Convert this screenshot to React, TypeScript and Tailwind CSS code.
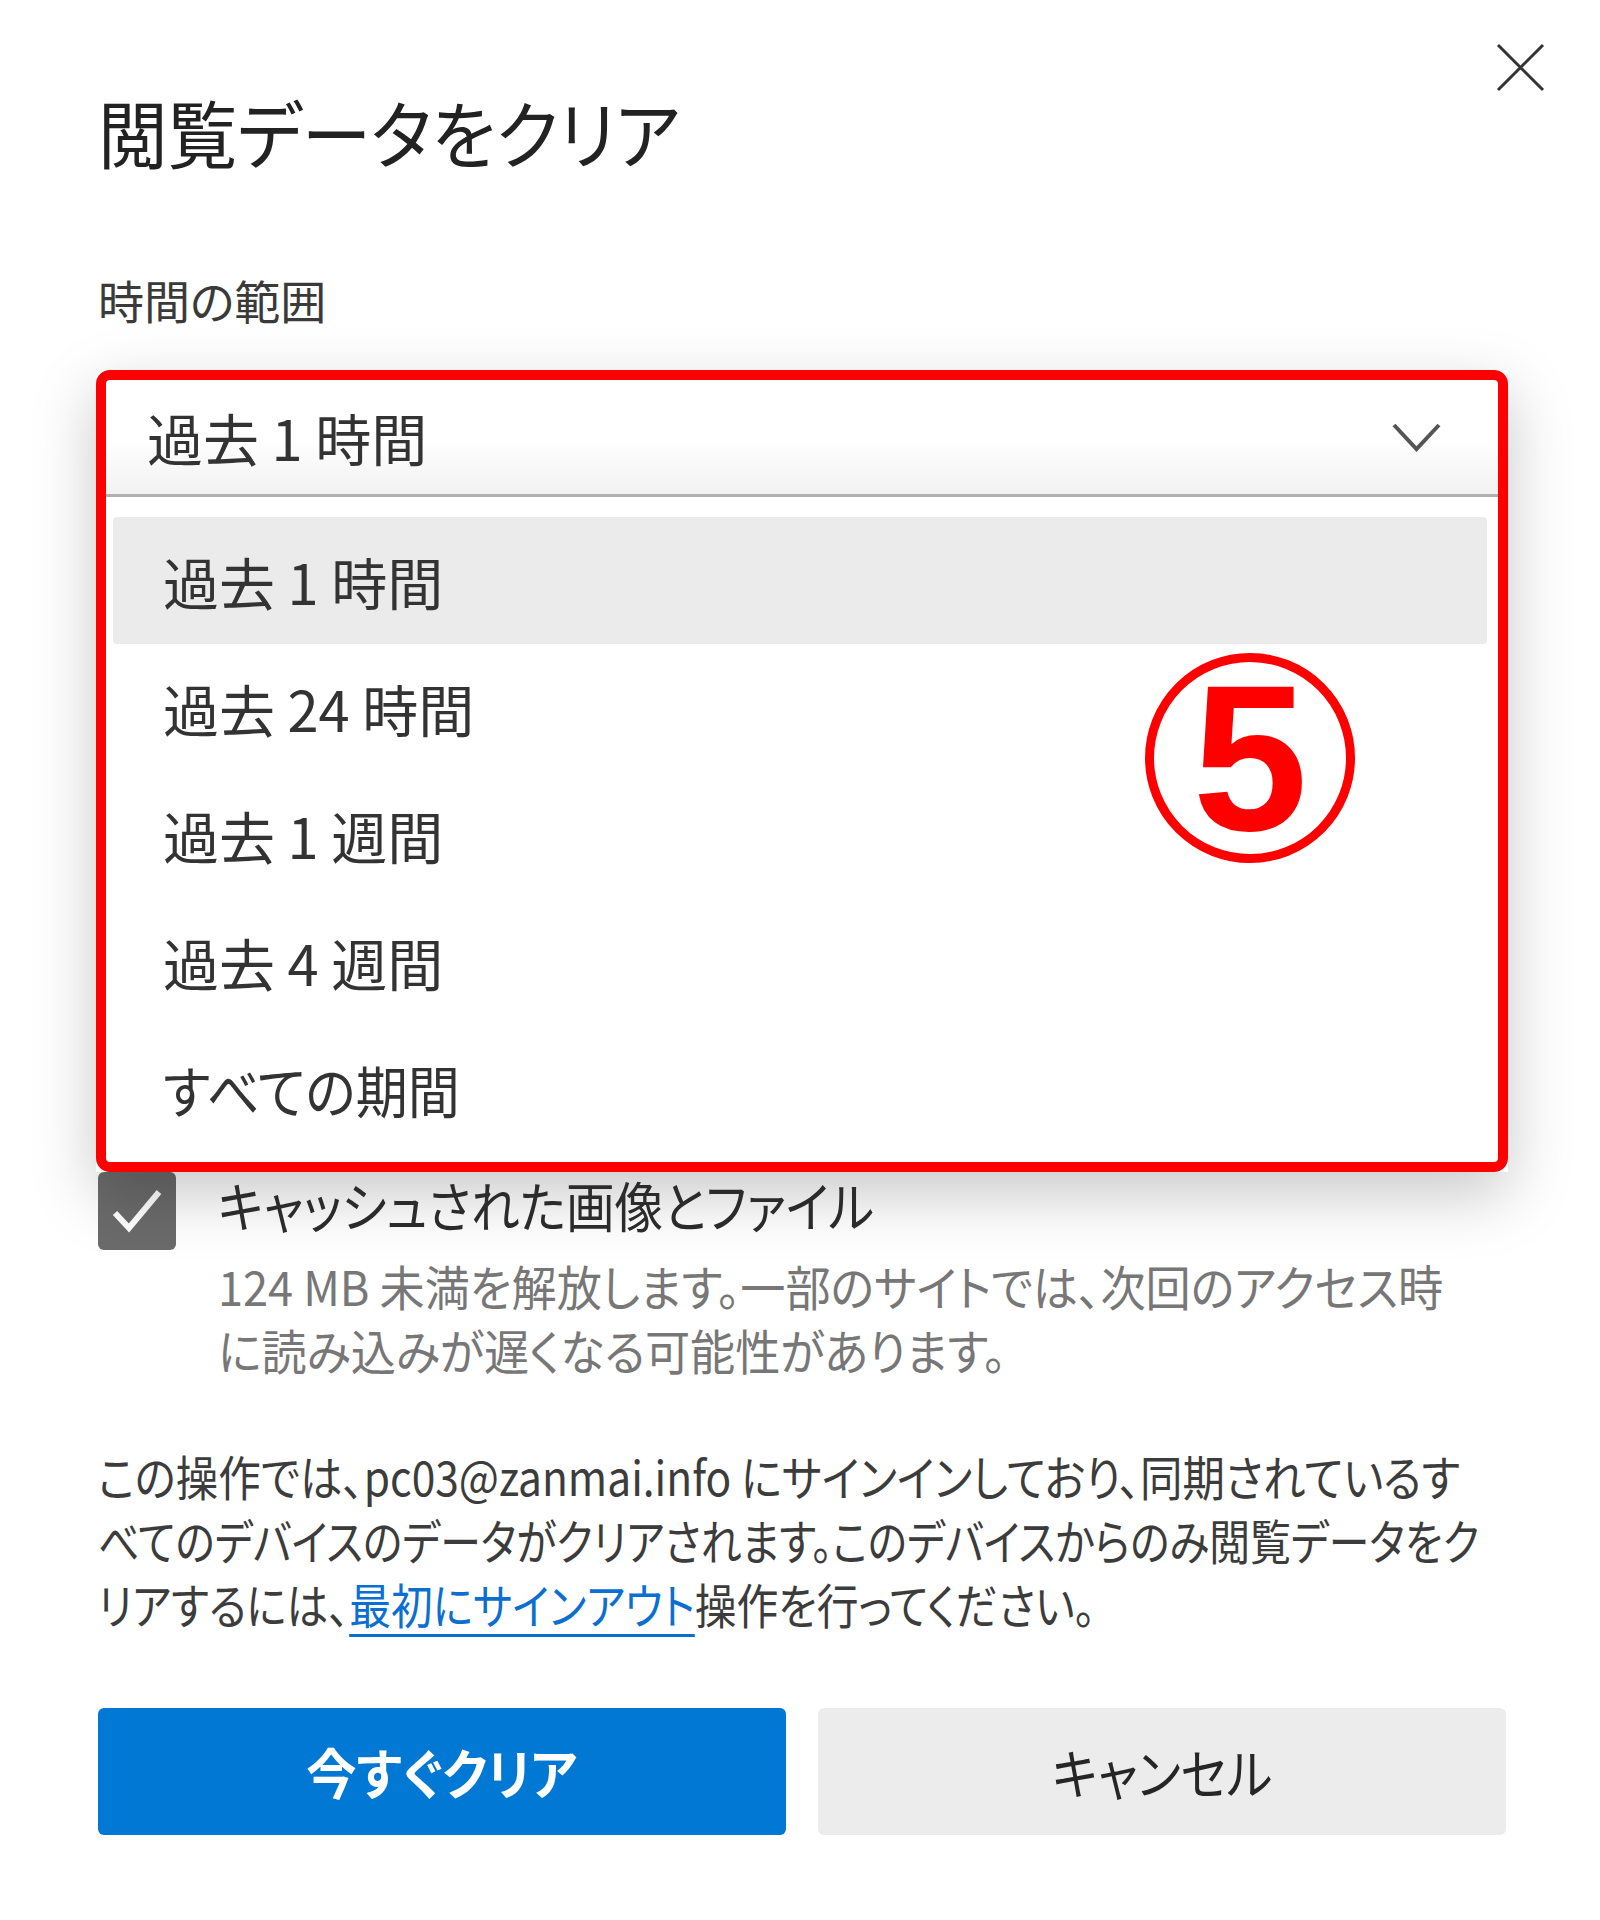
import React from "react";

const ranges = ["過去 1 時間", "過去 24 時間", "過去 1 週間", "過去 4 週間", "すべての期間"];

export default function App() {
    const selected = 0;

    return (
        <div className="w-[1600px] h-[1920px] bg-white overflow-hidden font-['Noto_Sans_CJK_JP','Noto_Sans',sans-serif] [font-feature-settings:'palt'] text-[#333]">
            <div className="pl-[98px] pr-[94px]">
                {/* Header */}
                <div className="flex justify-between items-start">
                    <h1 className="mt-[94px] w-max origin-left scale-x-[0.94] text-[74px] leading-none font-normal text-[#222]">
                        閲覧データをクリア
                    </h1>
                    <button className="mt-[43px] -mr-[39px] w-[49px] h-[49px] flex items-center justify-center">
                        <svg width="49" height="49" viewBox="0 0 49 49" fill="none">
                            <path d="M2 2 L47 47 M47 2 L2 47" stroke="#333" strokeWidth="3" />
                        </svg>
                    </button>
                </div>

                {/* Time range label */}
                <p className="mt-[108px] text-[46px] leading-none text-[#3a3a3a]">時間の範囲</p>

                {/* Select with open dropdown */}
                <div className="relative mt-[48px] -ml-[2px] w-[1412px] h-[802px] bg-white shadow-[0_22px_60px_rgba(0,0,0,0.22)] p-[10px]">
                    <div className="h-[117px] flex items-center justify-between pl-[41px] pr-[57px] border-b-[3px] border-[#b0b0b0] bg-gradient-to-b from-white via-white to-[#f2f2f2]">
                        <span className="text-[56px] leading-none text-[#333]">過去 1 時間</span>
                        <svg width="49" height="31" viewBox="0 0 49 31" fill="none">
                            <polyline points="2,3 24.5,27 47,3" stroke="#555" strokeWidth="4" />
                        </svg>
                    </div>
                    <ul className="pt-[20px] ml-[7px] mr-[11px]">
                        {ranges.map((r, i) => (
                            <li
                                key={r}
                                className={`h-[127px] flex items-center pl-[50px] text-[56px] leading-none text-[#333] rounded-[4px] ${i === selected ? "bg-[#ebebeb]" : ""}`}
                            >
                                <span className={i === 4 ? "origin-left scale-x-[0.93]" : ""}>{r}</span>
                            </li>
                        ))}
                    </ul>

                    {/* Annotation frame */}
                    <div className="absolute inset-0 border-[10px] border-[#ff0000] rounded-[14px] pointer-events-none" />
                    {/* Annotation number */}
                    <div className="absolute left-[1049px] top-[283px] w-[210px] h-[210px] rounded-full border-[9px] border-[#ff0000] flex items-center justify-center">
                        <span className="font-['Liberation_Sans',sans-serif] font-bold text-[207px] leading-none text-[#ff0000]">
                            5
                        </span>
                    </div>
                </div>

                {/* Cached images checkbox */}
                <div className="flex gap-[42px]">
                    <div className="shrink-0 w-[78px] h-[78px] rounded-[6px] bg-[#6b6b6b] flex items-center justify-center">
                        <svg width="52" height="48" viewBox="0 0 52 48" fill="none">
                            <polyline points="4,26 18,41 48,5" stroke="#fff" strokeWidth="6" />
                        </svg>
                    </div>
                    <div>
                        <p className="w-max origin-left scale-x-[0.9] text-[54px] leading-[66px] text-[#2b2b2b]">
                            キャッシュされた画像とファイル
                        </p>
                        <div className="mt-[15px] text-[48px] leading-[64px] text-[#777]">
                            <div className="w-max origin-left scale-x-[0.94] whitespace-nowrap">
                                124 MB 未満を解放します。一部のサイトでは、次回のアクセス時
                            </div>
                            <div className="w-max origin-left scale-x-[0.94] whitespace-nowrap">
                                に読み込みが遅くなる可能性があります。
                            </div>
                        </div>
                    </div>
                </div>

                {/* Sync notice */}
                <div className="mt-[62px] text-[48px] leading-[64px] text-[#3c3c3c]">
                    <div className="w-max origin-left scale-x-[0.885] whitespace-nowrap">
                        この操作では、pc03@zanmai.info にサインインしており、同期されているす
                    </div>
                    <div className="w-max origin-left scale-x-[0.85] whitespace-nowrap">
                        べてのデバイスのデータがクリアされます。このデバイスからのみ閲覧データをク
                    </div>
                    <div className="w-max origin-left scale-x-[0.87] whitespace-nowrap">
                        リアするには、
                        <a className="text-[#0a6fd0] underline decoration-[3px] underline-offset-[10px]">
                            最初にサインアウト
                        </a>
                        操作を行ってください。
                    </div>
                </div>

                {/* Actions */}
                <div className="mt-[73px] flex gap-[32px]">
                    <button className="flex-1 h-[127px] rounded-[6px] bg-[#0078d4] text-white text-[54px] font-bold flex items-center justify-center">
                        <span className="scale-x-[0.93]">今すぐクリア</span>
                    </button>
                    <button className="flex-1 h-[127px] rounded-[6px] bg-[#ececec] text-[#262626] text-[54px] flex items-center justify-center">
                        <span className="scale-x-[0.9]">キャンセル</span>
                    </button>
                </div>
            </div>
        </div>
    );
}
